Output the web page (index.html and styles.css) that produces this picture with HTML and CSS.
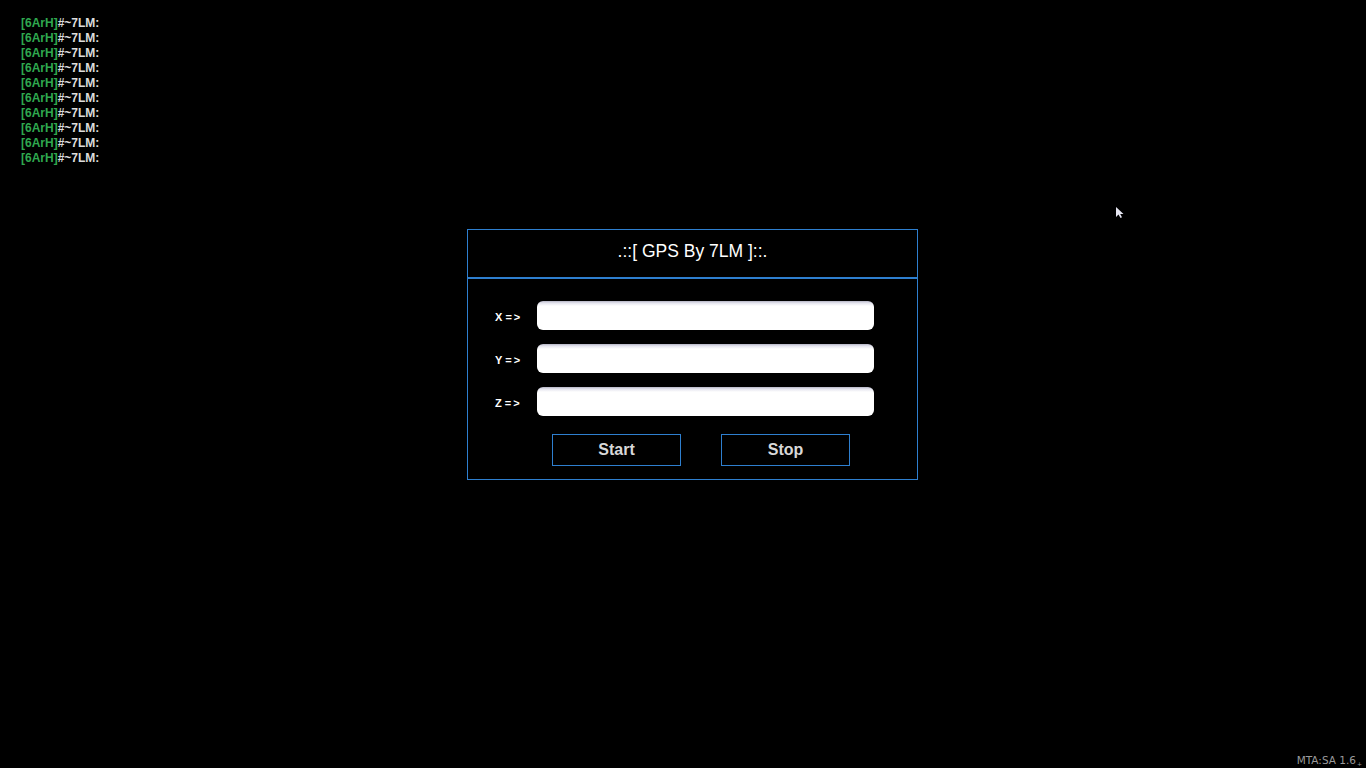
FILE: index.html
```html
<!DOCTYPE html>
<html>
<head>
<meta charset="utf-8">
<link rel="stylesheet" href="styles.css">
</head>
<body>
<div class="chat">
  <div class="line"><span class="tag">[6ArH]</span>#~7LM:</div>
  <div class="line"><span class="tag">[6ArH]</span>#~7LM:</div>
  <div class="line"><span class="tag">[6ArH]</span>#~7LM:</div>
  <div class="line"><span class="tag">[6ArH]</span>#~7LM:</div>
  <div class="line"><span class="tag">[6ArH]</span>#~7LM:</div>
  <div class="line"><span class="tag">[6ArH]</span>#~7LM:</div>
  <div class="line"><span class="tag">[6ArH]</span>#~7LM:</div>
  <div class="line"><span class="tag">[6ArH]</span>#~7LM:</div>
  <div class="line"><span class="tag">[6ArH]</span>#~7LM:</div>
  <div class="line"><span class="tag">[6ArH]</span>#~7LM:</div>
</div>

<div class="window">
  <div class="header">.::[ GPS By 7LM ]::.</div>
  <div class="body">
    <div class="row"><span class="label">X <span class="arrow">=&gt;</span></span><div class="input"></div></div>
    <div class="row"><span class="label">Y <span class="arrow">=&gt;</span></span><div class="input"></div></div>
    <div class="row"><span class="label">Z <span class="arrow">=&gt;</span></span><div class="input"></div></div>
    <div class="buttons">
      <div class="btn">Start</div>
      <div class="btn">Stop</div>
    </div>
  </div>
</div>

<svg class="cursor" width="10" height="13" viewBox="0 0 10 13">
  <path d="M1 1 L1 11 L3.5 8.5 L5.5 12 L7 11.2 L5.2 8 L8.5 8 Z" fill="#e6e6f2"/>
</svg>

<div class="version">MTA:SA 1.6<span class="mark">+</span></div>
</body>
</html>
```

FILE: styles.css
```css
html, body {
  margin: 0;
  padding: 0;
  background: #000;
  width: 1366px;
  height: 768px;
  overflow: hidden;
  position: relative;
  font-family: "Liberation Sans", Arial, sans-serif;
}

.chat {
  padding: 16px 0 0 21px;
  height: 153px;
}

.line {
  font-size: 12px;
  font-weight: bold;
  line-height: 15px;
  color: #dcdcdc;
  white-space: nowrap;
}

.tag {
  color: #2fa84f;
}

.window {
  margin-left: 467px;
  margin-top: 60px;
  width: 449px;
  height: 249px;
  border: 1px solid #2e7fcf;
  box-sizing: content-box;
  display: flex;
  flex-direction: column;
}

.header {
  height: 47px;
  border-bottom: 2px solid #2e7fcf;
  color: #fff;
  font-size: 17.5px;
  line-height: 43px;
  text-align: center;
}

.body {
  padding: 22px 0 0 27px;
  display: flex;
  flex-direction: column;
}

.row {
  display: flex;
  align-items: center;
  height: 29px;
  margin-bottom: 14px;
}

.label {
  width: 42px;
  color: #fff;
  font-size: 11px;
  font-weight: bold;
  padding-top: 2px;
  white-space: nowrap;
}

.arrow {
  letter-spacing: 2px;
}

.input {
  width: 337px;
  height: 29px;
  border-radius: 6px;
  background: linear-gradient(#b4b4c4 0px, #e4e4ee 2px, #fff 5px);
}

.buttons {
  display: flex;
  gap: 40px;
  margin-left: 57px;
  margin-top: 4px;
}

.btn {
  width: 127px;
  height: 30px;
  border: 1px solid #2e7fcf;
  color: #d8d8d8;
  font-size: 16px;
  font-weight: bold;
  line-height: 30px;
  text-align: center;
}

.cursor {
  position: absolute;
  left: 1115px;
  top: 206px;
}

.version {
  position: absolute;
  right: 4px;
  bottom: -3px;
  color: #9a9a9a;
  font-family: "DejaVu Sans", sans-serif;
  font-size: 10.5px;
  line-height: 14px;
}

.mark {
  font-size: 6px;
  vertical-align: -2px;
  margin-left: 1px;
}
```
